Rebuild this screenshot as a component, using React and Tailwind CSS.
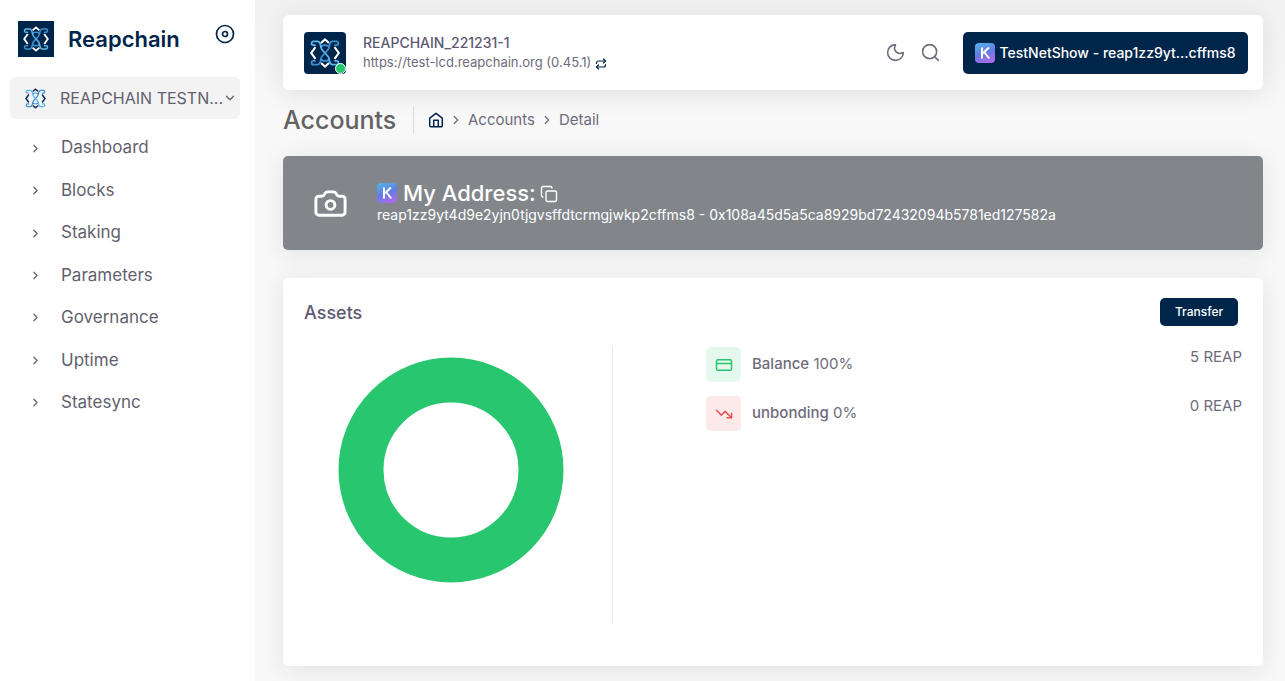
import {
  Camera, ChevronDown, ChevronRight, Copy, CreditCard, Moon, Repeat, Search, TrendingDown,
} from 'lucide-react';

const menu = ['Dashboard', 'Blocks', 'Staking', 'Parameters', 'Governance', 'Uptime', 'Statesync'];

function Knot({ diamond, className, box = '0 0 36 36' }) {
  return (
    <svg viewBox={box} fill="none" strokeLinecap="round" strokeLinejoin="round" className={className} aria-hidden="true">
      <path stroke={diamond} strokeWidth="1.8" strokeLinecap="butt" strokeLinejoin="miter" d="M14.6 9.400 18 6.400l3.400 3M14.600 26.600l3.400 3 3.400-3M9.800 13l-3.600 5 3.600 5M26.200 13l3.600 5-3.600 5" />
      <g strokeWidth="1.5">
        <path stroke="#3d8fd0" d="M14.500 13C15.500 10.600 20.500 10.600 21.500 13M14.500 23C15.500 25.400 20.500 25.400 21.500 23" />
        <path stroke="#3d8fd0" d="M26.500 11.300H28c2 0 2-3.300 0-3.300h-3.500C22 8 22 10 21.500 13 21 16.500 15 19.500 14.500 23 14 26 14 28 11.500 28H8c-2 0-2-3.300 0-3.300h1.500" />
        <path stroke="#5ab8ee" d="M9.500 11.300H8C6 11.300 6 8 8 8h3.500C14 8 14 10 14.500 13 15 16.500 21 19.500 21.500 23 22 26 22 28 24.500 28H28c2 0 2-3.300 0-3.300h-1.500" />
      </g>
    </svg>
  );
}

function KeplrIcon() {
  return (
    <span className="grid size-5 shrink-0 place-items-center rounded bg-linear-160 from-[#4fb4ea] via-[#627be5] to-[#b765f0]">
      <svg viewBox="0 0 20 20" className="size-5" fill="none" stroke="white" strokeWidth="2" aria-hidden="true">
        <path d="M7 4.500v11M14 4.500 8 10.300M9.200 9l5 6.500" />
      </svg>
    </span>
  );
}

function Home() {
  return (
    <svg viewBox="0 0 16 16" className="size-4" fill="none" stroke="#00254b" strokeWidth="1.500" strokeLinejoin="round" aria-hidden="true">
      <path d="M1.700 6.200 8 1.300l6.300 4.900v7.400a1.200 1.200 0 0 1-1.200 1.200H2.900a1.200 1.200 0 0 1-1.200-1.200zM5.700 14.500V8.200h4.600v6.300" />
    </svg>
  );
}

function Sidebar() {
  return (
    <aside className="w-[255px] shrink-0 bg-white">
      <div className="flex items-start pt-[21px] pr-5 pl-[18px]">
        <a href="#home" className="flex items-center gap-3.5">
          <Knot diamond="#fff" className="size-9 bg-[#00254b]" />
          <span className="text-[22px] leading-8 font-semibold text-[#00254b]">Reapchain</span>
        </a>
        <button type="button" aria-label="Pin menu" className="mt-[3px] ml-auto text-[#00254b]">
          <svg viewBox="0 0 20 20" className="size-5" fill="none" stroke="currentColor" strokeWidth="1.700" aria-hidden="true">
            <circle cx="10" cy="10" r="8.500" />
            <circle cx="10" cy="10" r="2.500" />
          </svg>
        </button>
      </div>
      <button type="button" className="mx-2.5 mt-5 flex h-[42px] w-[230px] items-center rounded-md bg-[#f3f3f3] pr-1 pl-[15px] text-[#625f6e]">
        <Knot diamond="#0b2a55" box="5 5 26 26" className="size-[21px] shrink-0" />
        <span className="ml-3.5 flex-1 text-left text-[16px] whitespace-nowrap">REAPCHAIN TESTN...</span>
        <ChevronDown size={14} strokeWidth={2} className="shrink-0" />
      </button>
      <nav className="mt-2 grid h-[297px] auto-rows-fr">
        {menu.map((name) => (
          <a key={name} href={`#${name.toLowerCase()}`} className="flex items-center gap-[19px] pl-[29px] text-[17px] text-[#625f6e]">
            <ChevronRight size={13} strokeWidth={2.2} />
            {name}
          </a>
        ))}
      </nav>
    </aside>
  );
}

function Header() {
  return (
    <header className="flex h-[75px] items-center rounded-md bg-white pr-[15px] pl-[21px] shadow-[0_4px_24px_rgba(34,41,47,0.1)]">
      <div className="relative">
        <Knot diamond="#fff" className="size-[42px] rounded bg-[#00254b]" />
        <span className="absolute right-0 bottom-0 size-[11px] rounded-full border border-white bg-[#28c76f]" />
      </div>
      <div className="mb-0.5 ml-[17px]">
        <p className="text-[14px] leading-5 font-medium text-[#5e5873]">REAPCHAIN_221231-1</p>
        <p className="flex items-center gap-1 text-[13px] leading-[18px] text-[#6e6b7b]">
          https://test-lcd.reapchain.org (0.45.1)
          <button type="button" aria-label="Switch endpoint" className="mt-1 text-[#00254b]"><Repeat size={12} strokeWidth={2.4} /></button>
        </p>
      </div>
      <div className="ml-auto flex items-center text-[#6e6b7b]">
        <button type="button" aria-label="Dark mode"><Moon size={21} strokeWidth={1.8} /></button>
        <button type="button" aria-label="Search" className="ml-3.5"><Search size={21} strokeWidth={1.8} /></button>
        <button type="button" className="ml-[22px] flex h-[42px] w-[285px] items-center justify-center gap-1 rounded-[5px] bg-[#00254b] text-[14px] font-medium text-white">
          <KeplrIcon />
          TestNetShow - reap1zz9yt...cffms8
        </button>
      </div>
    </header>
  );
}

function Asset({ icon, tint, name, percent, amount }) {
  return (
    <li className="flex h-[35px] items-center text-[15px] text-[#6e6b7b]">
      <span className={`grid size-[35px] place-items-center rounded-[5px] ${tint}`}>{icon}</span>
      <span className="ml-[11px]"><span className="font-medium">{name}</span> {percent}</span>
      <span className="ml-auto self-start leading-5">{amount}</span>
    </li>
  );
}

export default function App() {
  return (
    <div className="flex min-h-screen bg-[#f8f8f8] font-[Inter,sans-serif]">
      <Sidebar />
      <div className="min-w-0 flex-1 bg-linear-to-b from-[#f1f1f1] to-[#f8f8f8] to-[110px] pt-[15px] pr-[22px] pb-[15px] pl-7">
        <Header />
        <div className="mt-4 flex h-7 items-center">
          <h1 className="w-[131px] border-r border-[#d6dce1] text-[25px] leading-7 font-medium text-[#636363]">Accounts</h1>
          <nav aria-label="Breadcrumb" className="ml-3.5 flex items-center text-[15px] text-[#6e6b7b]">
            <a href="#home" aria-label="Home"><Home /></a>
            <ChevronRight size={14} className="mx-[5px]" />
            <a href="#accounts">Accounts</a>
            <ChevronRight size={14} className="mx-[5px]" />
            <span>Detail</span>
          </nav>
        </div>

        <section className="mt-[22px] flex h-[94px] items-center rounded-[5px] bg-[#82868b] pl-[30px] text-white shadow-[0_4px_24px_rgba(34,41,47,0.1)]">
          <Camera size={35} strokeWidth={2} />
          <div className="ml-[29px]">
            <div className="flex h-6 items-center">
              <KeplrIcon />
              <h2 className="ml-1.5 text-[22px] leading-6 font-medium">My Address:</h2>
              <button type="button" aria-label="Copy address" className="mt-0.5 ml-1"><Copy size={18} strokeWidth={1.8} /></button>
            </div>
            <p className="text-[14px] leading-5">reap1zz9yt4d9e2yjn0tjgvsffdtcrmgjwkp2cffms8 - 0x108a45d5a5ca8929bd72432094b5781ed127582a</p>
          </div>
        </section>

        <section className="mt-7 min-h-[388px] rounded-[5px] bg-white px-[21px] pt-5 shadow-[0_4px_24px_rgba(34,41,47,0.1)]">
          <div className="flex h-7 items-center justify-between">
            <h2 className="text-[18px] font-medium text-[#5e5873]">Assets</h2>
            <button type="button" className="mr-1 h-7 w-[78px] rounded-[5px] bg-[#00254b] text-[12px] font-medium text-white">Transfer</button>
          </div>
          <div className="mt-[21px] flex h-[276px]">
            <div className="flex w-[309px] justify-center border-r border-[#ebe9f1] pt-2.5 pr-[14px]">
              <svg viewBox="0 0 226 226" className="size-[226px]" role="img" aria-label="Balance 100%">
                <circle cx="113" cy="113" r="90" fill="none" stroke="#28c76f" strokeWidth="45" />
              </svg>
            </div>
            <ul className="ml-[93px] flex flex-1 flex-col gap-3.5">
              <Asset icon={<CreditCard size={18} />} tint="bg-[#e5f8ed] text-[#28c76f]" name="Balance" percent="100%" amount="5 REAP" />
              <Asset icon={<TrendingDown size={18} />} tint="bg-[#fceaea] text-[#ea5455]" name="unbonding" percent="0%" amount="0 REAP" />
            </ul>
          </div>
        </section>
      </div>
    </div>
  );
}
